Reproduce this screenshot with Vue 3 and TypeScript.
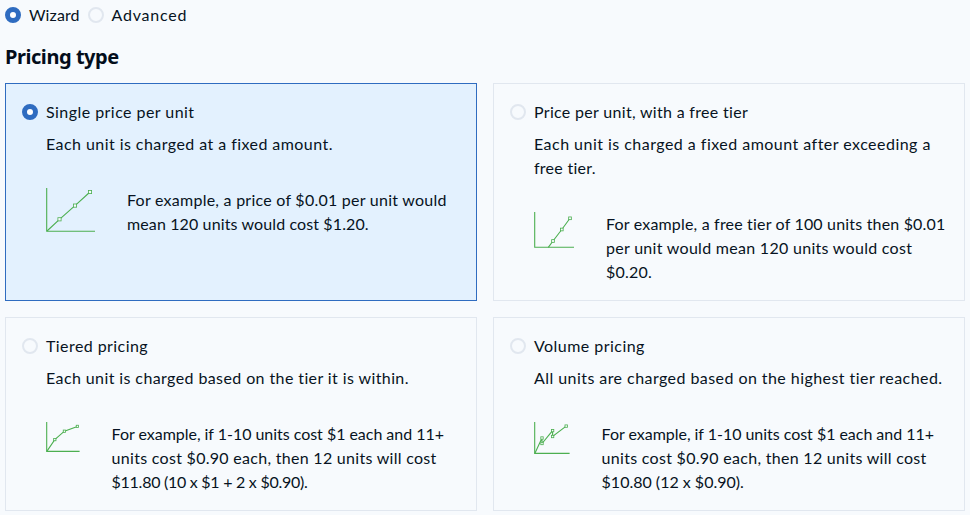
<script setup lang="ts">
import { ref } from 'vue'

interface Line {
  text: string
  track: number
}

interface Chart {
  width: number
  height: number
  floor: number
  paths: string[]
  points: [number, number][]
  marker: number
}

interface PricingOption {
  id: string
  title: Line
  description: Line[]
  example: Line[]
  chart: Chart
}

const line = (text: string, track = 0): Line => ({ text, track })

const modes = [
  { id: 'wizard', label: line('Wizard', 0.1) },
  { id: 'advanced', label: line('Advanced', 0.75) },
]

const options: PricingOption[] = [
  {
    id: 'single',
    title: line('Single price per unit', 0.45),
    description: [line('Each unit is charged at a fixed amount.', 0.44)],
    example: [
      line('For example, a price of $0.01 per unit would', 0.25),
      line('mean 120 units would cost $1.20.', 0.12),
    ],
    chart: {
      width: 49,
      height: 44,
      floor: 43.2,
      paths: ['M1 43 L13.5 31.3 L29 17.6 L44 4'],
      points: [[13.5, 31.3], [29, 17.6], [44, 4]],
      marker: 3.2,
    },
  },
  {
    id: 'free-tier',
    title: line('Price per unit, with a free tier', 0.31),
    description: [
      line('Each unit is charged a fixed amount after exceeding a', 0.47),
      line('free tier.', 0.26),
    ],
    example: [
      line('For example, a free tier of 100 units then $0.01', 0.18),
      line('per unit would mean 120 units would cost', 0.29),
      line('$0.20.', 0.2),
    ],
    chart: {
      width: 40,
      height: 36,
      floor: 35.3,
      paths: ['M14.3 35.3 L19 29 L27.8 17.5 L36 6.3'],
      points: [[19, 29], [27.8, 17.5], [36, 6.3]],
      marker: 2.7,
    },
  },
  {
    id: 'tiered',
    title: line('Tiered pricing', 0.43),
    description: [line('Each unit is charged based on the tier it is within.', 0.4)],
    example: [
      line('For example, if 1-10 units cost $1 each and 11+', -0.03),
      line('units cost $0.90 each, then 12 units will cost', 0.29),
      line('$11.80 (10 x $1 + 2 x $0.90).', -0.27),
    ],
    chart: {
      width: 33.6,
      height: 30,
      floor: 29.4,
      paths: ['M0.8 29.4 L8.8 17.6 L18.4 9.2 L31.4 4.4'],
      points: [[8.8, 17.6], [18.4, 9.2], [31.4, 4.4]],
      marker: 2.3,
    },
  },
  {
    id: 'volume',
    title: line('Volume pricing', 0.46),
    description: [line('All units are charged based on the highest tier reached.', 0.44)],
    example: [
      line('For example, if 1-10 units cost $1 each and 11+', -0.03),
      line('units cost $0.90 each, then 12 units will cost', 0.29),
      line('$10.80 (12 x $0.90).'),
    ],
    chart: {
      width: 35.6,
      height: 32,
      floor: 31.4,
      paths: ['M0.8 31.4 L8 16 L8 21.5 L18.6 8.6 L18.6 14.5 L32.2 4.1'],
      points: [[8, 16], [8, 21.5], [18.6, 8.6], [18.6, 14.5], [32.2, 4.1]],
      marker: 2.4,
    },
  },
]

const mode = ref('wizard')
const selected = ref('single')
</script>

<template>
  <main class="page">
    <div class="modes" role="radiogroup">
      <label v-for="m in modes" :key="m.id" class="choice">
        <input v-model="mode" class="radio" type="radio" name="mode" :value="m.id" />
        <span :style="{ letterSpacing: m.label.track + 'px' }">{{ m.label.text }}</span>
      </label>
    </div>

    <h2 class="heading">Pricing type</h2>

    <div class="grid">
      <label
        v-for="o in options"
        :key="o.id"
        class="card"
        :class="{ selected: selected === o.id }"
      >
        <span class="choice">
          <input v-model="selected" class="radio" type="radio" name="pricing" :value="o.id" />
          <span :style="{ letterSpacing: o.title.track + 'px' }">{{ o.title.text }}</span>
        </span>
        <span class="description">
          <span
            v-for="l in o.description"
            :key="l.text"
            class="line"
            :style="{ letterSpacing: l.track + 'px' }"
          >{{ l.text }}</span>
        </span>
        <span class="example">
          <svg
            class="chart"
            :width="o.chart.width"
            :height="o.chart.height"
            :viewBox="`0 0 ${o.chart.width} ${o.chart.height}`"
          >
            <path
              class="axis"
              :d="`M0.7 0 V${o.chart.floor} H${o.chart.width}`"
            />
            <path v-for="d in o.chart.paths" :key="d" class="curve" :d="d" />
            <rect
              v-for="([x, y], i) in o.chart.points"
              :key="i"
              class="marker"
              :x="x - o.chart.marker / 2"
              :y="y - o.chart.marker / 2"
              :width="o.chart.marker"
              :height="o.chart.marker"
            />
          </svg>
          <span class="example-text">
            <span
              v-for="l in o.example"
              :key="l.text"
              class="line"
              :style="{ letterSpacing: l.track + 'px' }"
            >{{ l.text }}</span>
          </span>
        </span>
      </label>
    </div>
  </main>
</template>

<style>
body {
  background: #f7fafd;
}
</style>

<style scoped>
.page {
  box-sizing: border-box;
  height: 515px;
  padding: 3px 5px 0;
  overflow: hidden;
  color: #071322;
  font: 16px/24px Lato, "Liberation Sans", sans-serif;
}

.modes {
  display: flex;
  gap: 8px;
}

.choice {
  display: flex;
  align-items: center;
  gap: 8px;
  white-space: nowrap;
}

.radio {
  appearance: none;
  box-sizing: border-box;
  flex: none;
  width: 16px;
  height: 16px;
  margin: 0;
  border: 2px solid #e1e7ef;
  border-radius: 50%;
}

.radio:checked {
  border: 5px solid #2f6cc0;
  background: #fff;
}

.heading {
  margin: 16px 0 12px;
  color: #030d1b;
  font: 700 20px/28px "Noto Sans", sans-serif;
  letter-spacing: -0.45px;
}

.grid {
  display: grid;
  grid-template-columns: 472px 472px;
  gap: 16px;
}

.card {
  box-sizing: border-box;
  padding: 16px;
  border: 1px solid #e1e7ef;
}

.card.selected {
  border-color: #2f6cc0;
  background: #e3f1fe;
}

.description {
  display: block;
  margin: 8px 0 32px 24px;
}

.example {
  display: flex;
  align-items: flex-start;
  gap: 32px;
  margin-left: 24px;
}

.line {
  display: block;
  white-space: nowrap;
}

.chart {
  flex: none;
  fill: none;
  stroke: #4caf50;
}

.axis {
  stroke-width: 1.1;
}

.curve {
  stroke-width: 1.1;
}

.marker {
  fill: #f7fafd;
  stroke-width: 0.8;
}
</style>
